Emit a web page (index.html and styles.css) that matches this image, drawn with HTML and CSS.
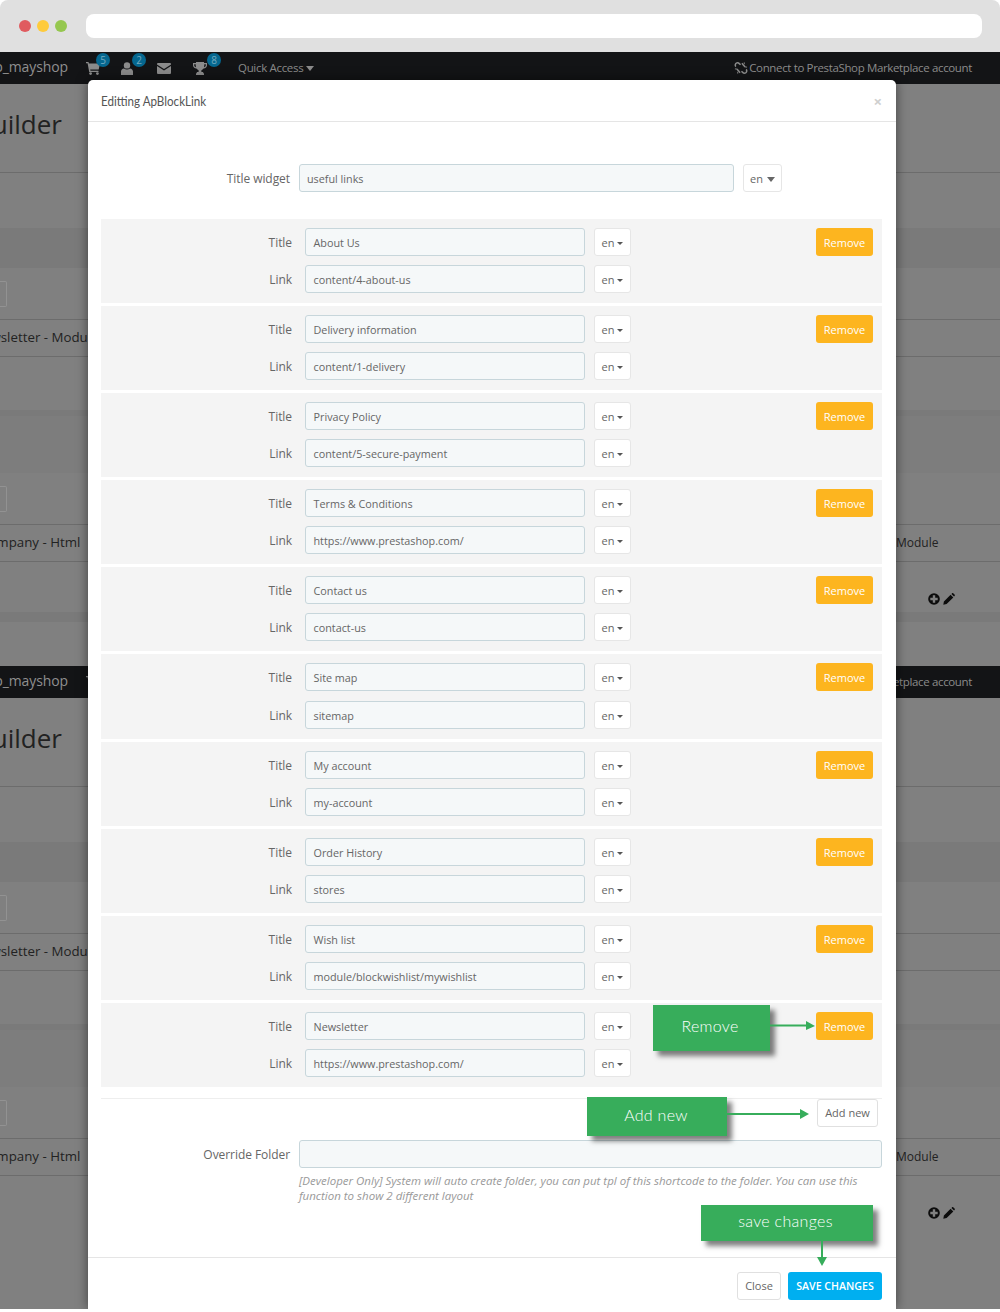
FILE: index.html
```html
<!DOCTYPE html>
<html lang="en">
<head>
<meta charset="utf-8">
<title>Editting ApBlockLink</title>
<link rel="stylesheet" href="styles.css">
</head>
<body>
<div class="page">
  <header class="chrome">
    <span class="dot dot-red"></span><span class="dot dot-yellow"></span><span class="dot dot-green"></span>
    <div class="urlbar"></div>
  </header>

  <section class="screen">
    <div class="topbar">
      <div class="brand"><span>ap_mayshop</span></div>
      <span class="nav-icon nav-cart"><svg width="14" height="13" viewBox="0 0 14 13"><path d="M0 0h2.500l.4 1.500H14l-1.300 6H4.200l.3 1.300h8v1.200H3.200L1.600 1.200H0z"/><circle cx="4.600" cy="11.600" r="1.400"/><circle cx="11.400" cy="11.600" r="1.400"/></svg><b class="badge">5</b></span>
      <span class="nav-icon nav-user"><svg width="12" height="13" viewBox="0 0 12 13"><circle cx="6" cy="3.400" r="3.200"/><path d="M0 13V9.600C0 7.800 1.400 6.600 3 6.400c1.600 1.400 4.400 1.400 6 0 1.600.2 3 1.400 3 3.200V13z"/></svg><b class="badge">2</b></span>
      <span class="nav-icon nav-mail"><svg width="14" height="11" viewBox="0 0 14 11"><path d="M1 0h12a1 1 0 0 1 1 1v.6L7 6 0 1.600V1a1 1 0 0 1 1-1z"/><path d="M0 3l7 4.400L14 3v7a1 1 0 0 1-1 1H1a1 1 0 0 1-1-1z"/></svg></span>
      <span class="nav-icon nav-trophy"><svg width="14" height="13" viewBox="0 0 14 13"><path d="M3 0h8v1h3v2.200C14 5 12.500 6.400 10.600 6.600 10 7.400 9.200 8 8.400 8.200V10h1.800v1.300H11V13H3v-1.700h.8V10h1.800V8.200C4.800 8 4 7.400 3.400 6.600 1.500 6.400 0 5 0 3.200V1h3zM1.200 2.200v1c0 .9.800 1.800 1.800 2.100-.3-.9-.3-2-.3-3.100zm11.600 0h-1.500c0 1.100 0 2.200-.3 3.100 1-.3 1.800-1.200 1.800-2.100z"/></svg><b class="badge">8</b></span>
      <span class="quick">Quick Access<i class="caret caret-light"></i></span>
      <span class="connect"><svg class="connect-icon" width="14" height="14" viewBox="0 0 15 14" fill="none" stroke="currentColor" stroke-width="1.600"><path d="M2 5.500c-1.300-1.300-.6-3.500 1-4 1-.3 2 .1 2.700.8L7 3.500M13 8.500c1.300 1.300.6 3.500-1 4-1 .3-2-.1-2.700-.8L8 10.500M3 8l2 2.200 1.500 1.800M12 6l-2-2.200L8.500 2"/><path d="M1 8h2M4 11v2M11 3V1M12 6h2" stroke-width="1"/></svg>Connect to PrestaShop Marketplace account</span>
    </div>
    <div class="page-title"><div class="brand-title"><span>Ap Page Builder</span></div></div>
    <div class="band"></div>
    <div class="toolbar"><span class="tool-box"></span></div>
    <div class="list-row"><span class="clip-newsletter">Newsletter - Module</span></div>
    <div class="band band-tall"></div>
    <div class="toolbar"><span class="tool-box"></span></div>
    <div class="list-row"><span class="clip-company">Company - Html</span><span class="module">Module</span></div>
    <div class="actions">
      <svg width="12" height="12" viewBox="0 0 12 12"><circle cx="6" cy="6" r="5.800" fill="#0c0c0c"/><path d="M4.800 2.300h2.400v2.500h2.500v2.400H7.200v2.500H4.800V7.200H2.300V4.800h2.500z" fill="#808080"/></svg>
      <svg width="12" height="12" viewBox="0 0 12 12"><path d="M.3 11.700l.6-3.300 6.700-6.700 2.700 2.700-6.700 6.700zM8.400 1l.6-.6c.4-.4 1-.4 1.400 0l1.200 1.200c.4.4.4 1 0 1.400l-.6.6z" fill="#0c0c0c"/></svg>
    </div>
    <div class="band band-thin"></div>
  </section>

  <section class="screen">
    <div class="topbar">
      <div class="brand"><span>ap_mayshop</span></div>
      <span class="nav-icon nav-cart"><svg width="14" height="13" viewBox="0 0 14 13"><path d="M0 0h2.500l.4 1.500H14l-1.300 6H4.200l.3 1.300h8v1.200H3.200L1.600 1.200H0z"/></svg></span>
      <span class="connect">Connect to PrestaShop Marketplace account</span>
    </div>
    <div class="page-title"><div class="brand-title"><span>Ap Page Builder</span></div></div>
    <div class="band"></div>
    <div class="toolbar"><span class="tool-box"></span></div>
    <div class="list-row"><span class="clip-newsletter">Newsletter - Module</span></div>
    <div class="band band-tall"></div>
    <div class="toolbar"><span class="tool-box"></span></div>
    <div class="list-row"><span class="clip-company">Company - Html</span><span class="module">Module</span></div>
    <div class="actions">
      <svg width="12" height="12" viewBox="0 0 12 12"><circle cx="6" cy="6" r="5.800" fill="#0c0c0c"/><path d="M4.800 2.300h2.400v2.500h2.500v2.400H7.200v2.500H4.800V7.200H2.300V4.800h2.500z" fill="#808080"/></svg>
      <svg width="12" height="12" viewBox="0 0 12 12"><path d="M.3 11.700l.6-3.300 6.700-6.700 2.700 2.700-6.700 6.700zM8.400 1l.6-.6c.4-.4 1-.4 1.400 0l1.200 1.200c.4.4.4 1 0 1.400l-.6.6z" fill="#0c0c0c"/></svg>
    </div>
  </section>

  <div class="modal">
    <div class="modal-head"><h2>Editting ApBlockLink</h2><span class="close-x">×</span></div>
    <div class="modal-body">
      <div class="widget-row">
        <label class="widget-label">Title widget</label>
        <div class="input widget-input">useful links</div>
        <button class="lang lang-wide">en<i class="caret caret-big"></i></button>
      </div>

      <div class="panel">
        <div class="fields">
          <div class="field"><label>Title</label><div class="input">About Us</div><button class="lang">en<i class="caret"></i></button></div>
          <div class="field"><label>Link</label><div class="input">content/4-about-us</div><button class="lang">en<i class="caret"></i></button></div>
        </div>
        <button class="remove">Remove</button>
      </div>
      <div class="panel">
        <div class="fields">
          <div class="field"><label>Title</label><div class="input">Delivery information</div><button class="lang">en<i class="caret"></i></button></div>
          <div class="field"><label>Link</label><div class="input">content/1-delivery</div><button class="lang">en<i class="caret"></i></button></div>
        </div>
        <button class="remove">Remove</button>
      </div>
      <div class="panel">
        <div class="fields">
          <div class="field"><label>Title</label><div class="input">Privacy Policy</div><button class="lang">en<i class="caret"></i></button></div>
          <div class="field"><label>Link</label><div class="input">content/5-secure-payment</div><button class="lang">en<i class="caret"></i></button></div>
        </div>
        <button class="remove">Remove</button>
      </div>
      <div class="panel">
        <div class="fields">
          <div class="field"><label>Title</label><div class="input">Terms &amp; Conditions</div><button class="lang">en<i class="caret"></i></button></div>
          <div class="field"><label>Link</label><div class="input">https://www.prestashop.com/</div><button class="lang">en<i class="caret"></i></button></div>
        </div>
        <button class="remove">Remove</button>
      </div>
      <div class="panel">
        <div class="fields">
          <div class="field"><label>Title</label><div class="input">Contact us</div><button class="lang">en<i class="caret"></i></button></div>
          <div class="field"><label>Link</label><div class="input">contact-us</div><button class="lang">en<i class="caret"></i></button></div>
        </div>
        <button class="remove">Remove</button>
      </div>
      <div class="panel panel-tall">
        <div class="fields">
          <div class="field"><label>Title</label><div class="input">Site map</div><button class="lang">en<i class="caret"></i></button></div>
          <div class="field"><label>Link</label><div class="input">sitemap</div><button class="lang">en<i class="caret"></i></button></div>
        </div>
        <button class="remove">Remove</button>
      </div>
      <div class="panel">
        <div class="fields">
          <div class="field"><label>Title</label><div class="input">My account</div><button class="lang">en<i class="caret"></i></button></div>
          <div class="field"><label>Link</label><div class="input">my-account</div><button class="lang">en<i class="caret"></i></button></div>
        </div>
        <button class="remove">Remove</button>
      </div>
      <div class="panel">
        <div class="fields">
          <div class="field"><label>Title</label><div class="input">Order History</div><button class="lang">en<i class="caret"></i></button></div>
          <div class="field"><label>Link</label><div class="input">stores</div><button class="lang">en<i class="caret"></i></button></div>
        </div>
        <button class="remove">Remove</button>
      </div>
      <div class="panel">
        <div class="fields">
          <div class="field"><label>Title</label><div class="input">Wish list</div><button class="lang">en<i class="caret"></i></button></div>
          <div class="field"><label>Link</label><div class="input">module/blockwishlist/mywishlist</div><button class="lang">en<i class="caret"></i></button></div>
        </div>
        <button class="remove">Remove</button>
      </div>
      <div class="panel">
        <div class="fields">
          <div class="field"><label>Title</label><div class="input">Newsletter</div><button class="lang">en<i class="caret"></i></button></div>
          <div class="field"><label>Link</label><div class="input">https://www.prestashop.com/</div><button class="lang">en<i class="caret"></i></button></div>
        </div>
        <button class="remove">Remove</button>
      </div>

      <div class="add-row"><button class="add-new">Add new</button></div>

      <div class="override-row">
        <label class="widget-label">Override Folder</label>
        <div class="override-col">
          <div class="input override-input"></div>
          <p class="help">[Developer Only] System will auto create folder, you can put tpl of this shortcode to the folder. You can use this function to show 2 different layout</p>
        </div>
      </div>
    </div>
    <div class="modal-foot">
      <button class="btn-close">Close</button>
      <button class="btn-save">SAVE CHANGES</button>
    </div>

    <div class="callout callout-remove">Remove</div>
    <svg class="arrow arrow-remove" width="46" height="10" viewBox="0 0 46 10"><path d="M0 4.500h38" stroke="#37ad5b" stroke-width="2"/><path d="M36 0l9 5-9 4z" fill="#37ad5b"/></svg>
    <div class="callout callout-add">Add new</div>
    <svg class="arrow arrow-add" width="82" height="10" viewBox="0 0 82 10"><path d="M0 5h74" stroke="#37ad5b" stroke-width="2"/><path d="M73 0l9 5-9 5z" fill="#37ad5b"/></svg>
    <div class="callout callout-save">save changes</div>
    <svg class="arrow arrow-save" width="10" height="25" viewBox="0 0 10 25"><path d="M5 0v17" stroke="#37ad5b" stroke-width="2"/><path d="M0 16h10l-5 9z" fill="#37ad5b"/></svg>
  </div>
</div>
</body>
</html>
```

FILE: styles.css
```css
* { box-sizing: border-box; }
html, body { margin: 0; padding: 0; background: #fff; }
body { font-family: "Open Sans", "Liberation Sans", sans-serif; font-size: 12px; color: #666; }
.page { position: relative; width: 1000px; height: 1309px; overflow: hidden; background: #fff; }

.chrome { height: 52px; background: #e0e0e0; border-radius: 8px 8px 0 0; display: flex; align-items: center; padding: 0 18px 0 19px; gap: 6px; }
.dot { width: 12px; height: 12px; border-radius: 50%; }
.dot-red { background: #e05b5f; }
.dot-yellow { background: #fecb3c; }
.dot-green { background: #95c74f; }
.urlbar { flex: 1; height: 24px; margin-left: 13px; background: #fff; border-radius: 8px; }

.screen { height: 614px; background: #808080; color: #1c1c1e; display: flex; flex-direction: column; overflow: hidden; }
.screen + .screen { height: 643px; }
.topbar { height: 32px; flex: none; background: #131416; color: #8b8b8b; display: flex; align-items: flex-start; padding-top: 5px; position: relative; }
.brand { width: 68px; display: flex; justify-content: flex-end; white-space: nowrap; font-size: 14px; line-height: 19px; letter-spacing: -.1px; color: #8f8f8f; }
.nav-icon { position: relative; flex: none; margin-top: 5px; color: #8b8b8b; display: block; height: 13px; line-height: 0; }
.nav-icon svg { fill: #8b8b8b; }
.nav-cart { margin-left: 18px; }
.nav-user { margin-left: 21px; }
.nav-mail { margin-left: 24px; margin-top: 6px; }
.nav-trophy { margin-left: 22px; }
.badge { position: absolute; left: 10px; top: -9px; width: 14px; height: 14px; border-radius: 50%; background: #05678f; color: #74a9be; font: 400 10px/14px "Open Sans", sans-serif; text-align: center; }
.nav-user .badge { left: 11px; }
.nav-trophy .badge { left: 14px; }
.quick { margin-left: 31px; margin-top: 3px; font-size: 11.5px; line-height: 15px; letter-spacing: -.32px; white-space: nowrap; }
.caret { display: inline-block; width: 0; height: 0; margin-left: 3px; vertical-align: 2px; border-left: 3px solid transparent; border-right: 3px solid transparent; border-top: 3px solid #555; }
.caret-light { border-left-width: 4px; border-right-width: 4px; border-top: 5px solid #8b8b8b; vertical-align: 1px; }
.caret-big { border-left-width: 4px; border-right-width: 4px; border-top: 5px solid #666; vertical-align: 1px; margin-left: 4px; }
.connect { margin-left: auto; margin-right: 28px; margin-top: 3px; display: flex; align-items: center; font-size: 11.5px; line-height: 15px; letter-spacing: -.36px; white-space: nowrap; }
.connect-icon { margin-right: 1px; }

.page-title { height: 89px; flex: none; border-bottom: 1px solid #6c6c6c; padding-top: 22px; }
.brand-title { width: 62px; display: flex; justify-content: flex-end; white-space: nowrap; font-size: 26px; line-height: 36px; color: #222; }
.band { height: 40px; flex: none; margin-top: 55px; background: #7a7a7a; }
.band-tall { margin-top: 53px; height: 63px; background: #7d7d7d; border-top: 6px solid #7a7a7a; }
.band-thin { margin-top: 0; height: 10px; }
.toolbar { height: 51px; flex: none; padding-top: 13px; }
.tool-box { display: block; width: 7px; height: 26px; border: 1px solid #929292; border-left: 0; border-radius: 0 2px 2px 0; }
.list-row { height: 38px; flex: none; border-top: 1px solid #6c6c6c; border-bottom: 1px solid #6c6c6c; display: flex; justify-content: space-between; align-items: center; padding-bottom: 2px; font-size: 13.3px; color: #222; white-space: nowrap; }
.clip-newsletter { margin-left: -27px; }
.clip-company { margin-left: -20px; }
.module { width: 104px; font-size: 12px; }
.actions { flex: none; height: 50px; display: flex; justify-content: flex-end; gap: 3px; padding: 31px 45px 0 0; }

.modal { position: absolute; left: 88px; top: 80px; width: 808px; height: 1229px; background: #fff; border-radius: 5px 5px 0 0; box-shadow: 0 0 12px rgba(0,0,0,.5); display: flex; flex-direction: column; }
.modal-head { height: 42px; flex: none; border-bottom: 1px solid #e5e5e5; display: flex; align-items: center; justify-content: space-between; padding: 0 14px 0 13px; }
.modal-head h2 { margin: 0; font: 400 14px/20px Lato, "Liberation Sans", sans-serif; color: #555; transform: scaleX(.83); transform-origin: left center; white-space: nowrap; }
.close-x { font-size: 15px; font-weight: 700; color: #cfcfcf; line-height: 20px; }
.modal-body { flex: 1; padding: 42px 14px 0 13px; }
.widget-row { display: flex; align-items: center; gap: 9px; margin-bottom: 27px; }
.widget-label { width: 189px; flex: none; text-align: right; line-height: 30px; height: 28px; letter-spacing: -.06px; }
.input { height: 28px; line-height: 28px; padding: 0 7.5px; background: #f5f8f9; border: 1px solid #c7d6db; border-radius: 3px; color: #666; font-size: 10.8px; white-space: nowrap; }
.widget-input { width: 435px; padding-left: 7px; }
.lang { width: 37px; height: 28px; padding: 2px 0 0; background: #fff; border: 1px solid #e6e6e6; border-radius: 3px; font: 400 11px/24px "Open Sans", sans-serif; color: #666; }
.lang-wide { width: 39px; }

.panel { height: 84px; margin-bottom: 3px; padding: 9px 9px 0 0; background: #f4f4f4; display: flex; justify-content: space-between; align-items: flex-start; }
.panel-tall { height: 85px; }
.panel-tall .fields { gap: 10px; }
.panel-tall + .panel { margin-top: 3px; }
.fields { display: flex; flex-direction: column; gap: 9px; }
.field { display: flex; align-items: center; }
.field label { width: 191px; height: 28px; line-height: 30px; text-align: right; margin-right: 13px; letter-spacing: -.06px; }
.field .input { width: 280px; margin-right: 9px; }
.remove { width: 57px; height: 28px; padding: 2px 0 0; border: 0; border-radius: 3px; background: #fdb51f; color: #fff; font: 500 11px/26px "Open Sans", sans-serif; }

.add-row { margin-top: 11px; border-top: 1px solid #eee; display: flex; justify-content: flex-end; padding-right: 4px; height: 42px; }
.add-new { width: 61px; height: 28px; padding: 0; background: #fff; border: 1px solid #e0e0e0; border-radius: 3px; font: 400 11px/26px "Open Sans", sans-serif; color: #666; }
.override-row { display: flex; gap: 9px; }
.override-col { flex: 1; }
.override-input { height: 28px; }
.help { margin: 5px 0 0; font-size: 11.5px; line-height: 15px; font-style: italic; color: #999; }

.modal-foot { height: 52px; flex: none; border-top: 1px solid #e5e5e5; display: flex; justify-content: flex-end; gap: 7px; padding: 14px 14px 0 0; }
.btn-close { width: 44px; height: 28px; padding: 0; background: #fff; border: 1px solid #e0e0e0; border-radius: 3px; font: 400 11px/26px "Open Sans", sans-serif; color: #666; }
.btn-save { width: 94px; height: 28px; padding: 0; background: #00aff0; border: 0; border-radius: 3px; font: 600 10.6px/28px "Open Sans", sans-serif; color: #fff; }

.callout { position: absolute; background: #37ad5b; color: #fff; font-family: Lato, sans-serif; font-weight: 300; font-size: 16px; text-align: center; letter-spacing: .3px; box-shadow: 5px 5px 5px rgba(0,0,0,.5); }
.callout-remove { left: 565px; top: 925px; width: 117px; height: 46px; line-height: 42px; padding-right: 3px; }
.callout-add { left: 499px; top: 1017px; width: 140px; height: 39px; line-height: 35px; padding-right: 2px; }
.callout-save { left: 613px; top: 1125px; width: 172px; height: 36px; line-height: 32px; padding-right: 3px; }
.arrow { position: absolute; }
.arrow-remove { left: 682px; top: 941px; }
.arrow-add { left: 639px; top: 1029px; }
.arrow-save { left: 729px; top: 1161px; }
```
